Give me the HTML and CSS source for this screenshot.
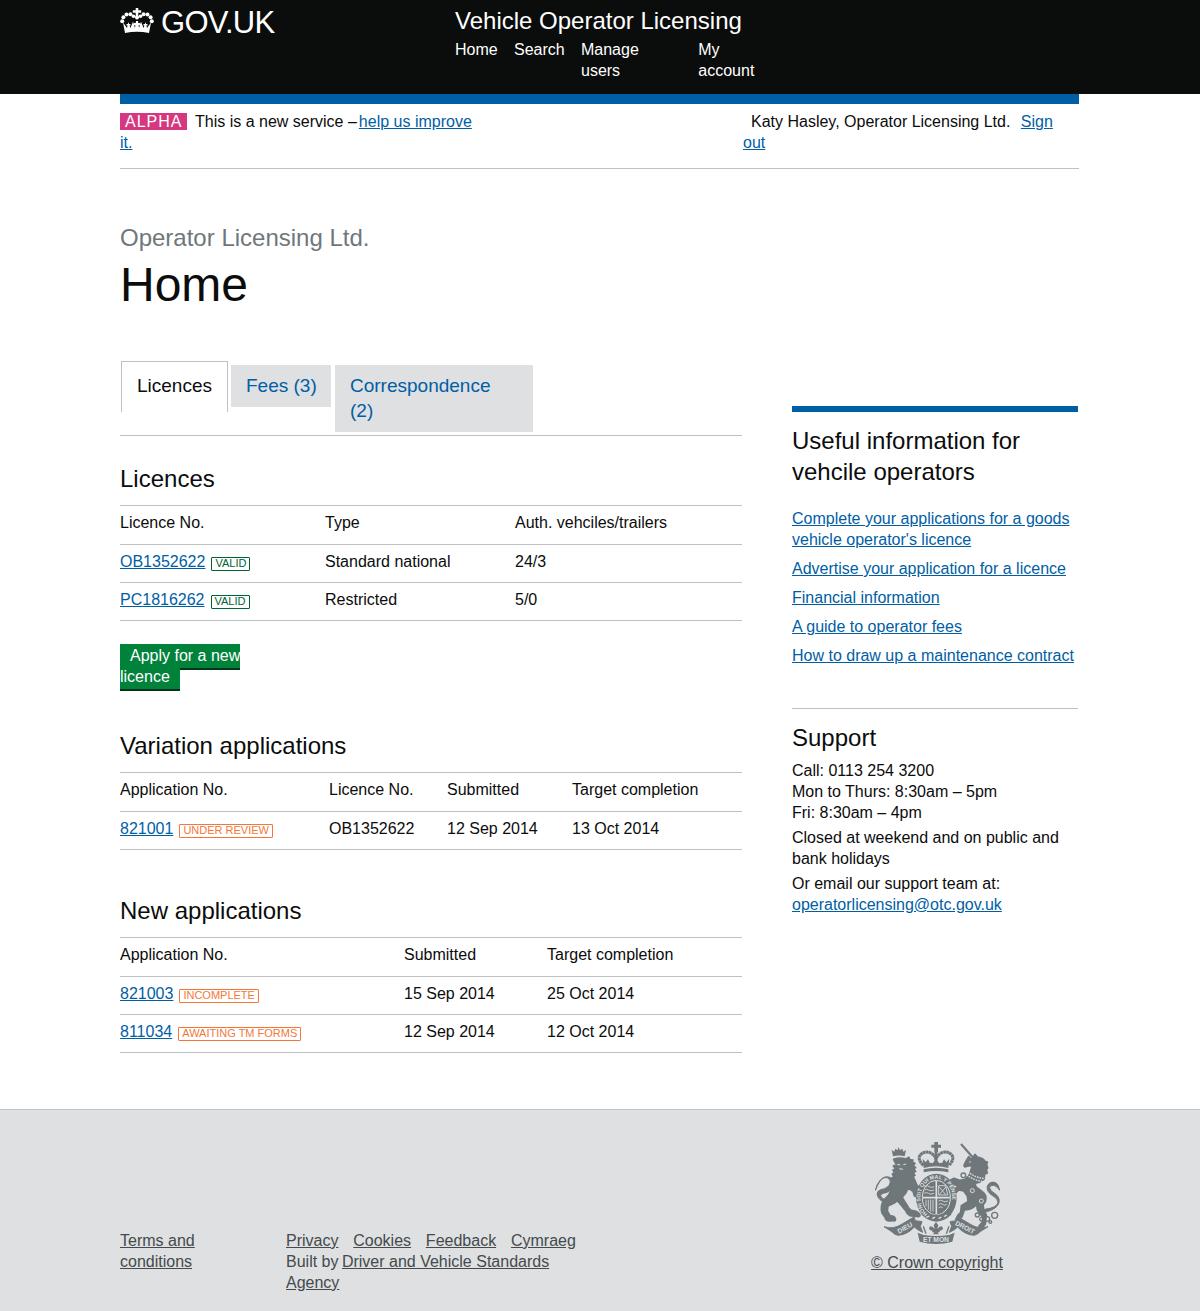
FILE: index.html
```html
<!DOCTYPE html>
<html lang="en">
<head>
<meta charset="utf-8">
<title>Home - Vehicle Operator Licensing</title>
<link rel="stylesheet" href="styles.css">
</head>
<body>
<header class="masthead">
  <div class="wrap masthead-inner">
    <a class="brand" href="#">
      <svg class="crown" viewBox="0 0 34 26" fill="#fff" aria-hidden="true">
        <path d="M5 25 3 14.500 7 20 8.300 14 10.500 20 13 13.500 15 20 16 13H18L19 20 21 13.500 23.500 20 25.700 14 27 20 31 14.500 29 25Q17 22.500 5 25Z"/>
        <path d="M15.700 0h2.600v2.200h2.900v2.600h-2.900v5.400h-2.600V4.800H12.800V2.200h2.900Z"/>
        <circle cx="2.200" cy="13.200" r="2"/><circle cx="3.400" cy="9.300" r="2"/><circle cx="6.500" cy="6.600" r="2"/><circle cx="10.400" cy="6.200" r="2"/><circle cx="13.500" cy="8.300" r="1.800"/>
        <circle cx="17" cy="9.500" r="2"/>
        <circle cx="31.800" cy="13.200" r="2"/><circle cx="30.600" cy="9.300" r="2"/><circle cx="27.500" cy="6.600" r="2"/><circle cx="23.600" cy="6.200" r="2"/><circle cx="20.500" cy="8.300" r="1.800"/>
        <path d="M14 15h6v2.200h-6zM6.500 16H10.500v1.600H6.500zM23.500 16h4v1.600H23.500z"/>
      </svg>
      <span class="brand-name">GOV.UK</span>
    </a>
    <div class="service">
      <a class="service-name" href="#">Vehicle Operator Licensing</a>
      <nav class="nav">
        <a href="#">Home</a><a href="#">Search</a><a class="nav-users" href="#">Manage users</a><a class="nav-account" href="#">My account</a>
      </nav>
    </div>
  </div>
</header>
<div class="wrap">
  <div class="phase">
    <p class="phase-text"><strong class="alpha">ALPHA</strong>This is a new service –<a class="improve" href="#">help us improve it.</a></p>
    <p class="user"><span class="user-name">Katy Hasley, Operator Licensing Ltd.</span> <a href="#">Sign out</a></p>
  </div>
  <h1><span class="caption">Operator Licensing Ltd.</span>Home</h1>
  <div class="columns">
    <main class="main">
      <nav class="tabs">
        <a class="tab tab-on" href="#">Licences</a><a class="tab tab-fees" href="#">Fees (3)</a><a class="tab tab-wide" href="#">Correspondence (2)</a>
      </nav>
      <section>
        <h2>Licences</h2>
        <table class="licences">
          <tr><th>Licence No.</th><th>Type</th><th>Auth. vehciles/trailers</th></tr>
          <tr><td><a href="#">OB1352622</a><span class="tag tag-green">VALID</span></td><td>Standard national</td><td>24/3</td></tr>
          <tr><td><a href="#">PC1816262</a><span class="tag tag-green">VALID</span></td><td>Restricted</td><td>5/0</td></tr>
        </table>
        <p class="apply"><a class="button" href="#">Apply for a new licence</a></p>
      </section>
      <section class="variations-block">
        <h2>Variation applications</h2>
        <table class="variations">
          <tr><th>Application No.</th><th>Licence No.</th><th>Submitted</th><th>Target completion</th></tr>
          <tr><td><a href="#">821001</a><span class="tag">UNDER REVIEW</span></td><td>OB1352622</td><td>12 Sep 2014</td><td>13 Oct 2014</td></tr>
        </table>
      </section>
      <section class="new-block">
        <h2>New applications</h2>
        <table class="new">
          <tr><th>Application No.</th><th>Submitted</th><th>Target completion</th></tr>
          <tr><td><a href="#">821003</a><span class="tag">INCOMPLETE</span></td><td>15 Sep 2014</td><td>25 Oct 2014</td></tr>
          <tr><td><a href="#">811034</a><span class="tag">AWAITING TM FORMS</span></td><td>12 Sep 2014</td><td>12 Oct 2014</td></tr>
        </table>
      </section>
    </main>
    <aside class="side">
      <h2>Useful information for vehcile operators</h2>
      <ul class="links">
        <li><a href="#">Complete your applications for a goods vehicle operator's licence</a></li>
        <li><a href="#">Advertise your application for a licence</a></li>
        <li><a href="#">Financial information</a></li>
        <li><a href="#">A guide to operator fees</a></li>
        <li><a href="#">How to draw up a maintenance contract</a></li>
      </ul>
      <div class="support">
        <h2>Support</h2>
        <p>Call: 0113 254 3200<br>Mon to Thurs: 8:30am – 5pm<br>Fri: 8:30am – 4pm</p>
        <p>Closed at weekend and on public and bank holidays</p>
        <p>Or email our support team at: <a href="#">operatorlicensing@otc.gov.uk</a></p>
      </div>
    </aside>
  </div>
</div>
<footer class="footer">
  <div class="wrap footer-inner">
    <a class="terms" href="#">Terms and conditions</a>
    <div class="footer-mid">
      <div class="footer-links"><a href="#">Privacy</a><a href="#">Cookies</a><a href="#">Feedback</a><a href="#">Cymraeg</a></div>
      <p>Built by <a class="agency" href="#">Driver and Vehicle Standards Agency</a></p>
    </div>
    <a class="copyright" href="#">
      <svg class="arms" viewBox="45 36 375 306" fill="#6f777b" aria-hidden="true">
        <!-- imperial crown -->
        <path d="M223 36h11v8h9v9h-9v14h-11V53h-9v-9h9z"/>
        <g fill="none" stroke="#6f777b">
          <path d="M190 106Q172 88 180 76 192 62 210 68 224 74 228 88 232 74 246 68 264 62 276 76 284 88 267 106" stroke-width="9" stroke-dasharray="8 1"/>
          <path d="M228 66v40" stroke-width="8"/>
        </g>
        <path d="M188 86l9 11 7-9 5 10 9 2 10-13 10 13 9-2 5-10 7 9 9-11-3 28q-37-10-74 0z"/>
        <path d="M191 118q37-9 74 0v9q-37-8-74 0z"/>
        <!-- lion -->
        <path d="M99 79l-4-19 8 5 3-9 7 5 3-10 4 10 7-5 3 9 8-5-4 19q-18-5-35 0z"/>
        <path stroke="#6f777b" stroke-width="5" stroke-linejoin="round" d="M101 88q18-7 36-1l10-5 2 7 10 1-2 7 8 3-5 7 7 6-6 4 6 7-7 4 5 8-6 4 5 9q4 14 13 24l2 22-7 7-9-5-4-13-15-10-6 14-11 14q8 15 14 23 5 11 13 16l14 3q12 6 12 13-4 5-12 2l-19-2q-8-5-12-15l-14-17-11-13-9 7-19 9-2 15 8 14 12 3q7 7 3 12l-18 1q-10-1-12-11l-9-13q-6-21 5-38l15-16q9-12 9-26l4-17-4-8 7-3-5-9 7-3-5-9 8-3-7-9 9-4-5-9z"/>
        <path d="M72 218Q44 200 54 184 61 178 74 176 94 166 90 151 84 139 72 143q-13 5-26 38 4-19 15-31 14-14 28-8 17 8 13 24-5 16-24 22-18 3-16 10 3 8 16 12z" stroke="#6f777b" stroke-width="3"/>
        <path d="M112 103l9 2M130 104l8-2M118 116l11 2" fill="none" stroke="#dee0e2" stroke-width="3"/>
        <!-- unicorn -->
        <path d="M303 42l37 42" fill="none" stroke="#6f777b" stroke-width="6"/>
        <path stroke="#6f777b" stroke-width="5" stroke-linejoin="round" d="M334 88l6-7 5-8 7 8q18 3 24 14l6 1-2 8 3 9-4 6 3 10-8 4-2 15q-13 11-27 12l3 11 19 14q15 10 9 30l-7 10 2 12 8 18-3 27-10 14-12 0 4-9 9-10 2-14-17-24-2-17q-7 11-24 16l-13 2-7 20-11 12-8-3 6-12 9-10 2-20 20-13-2-16-11-15-14-3-10 9-7 6-6-5 5-10 16-11q-10-4-16-9l-11 8 0-4 4-14 10-5 17 6 16-3 14-15 5-17 4-9-14 1-9 3-3-4 5-12 9-15z"/>
        <path d="M374 238q38-5 40-21 0-12-16-20-20-12-16-29 8-16 25-10 9 5 12 23-7-13-18-15-12-1-12 7 0 9 16 18 15 10 12 27-6 20-41 28z" stroke="#6f777b" stroke-width="3"/>
        <path d="M323 125q24 19 48 20M319 134q24 18 48 20" fill="none" stroke="#dee0e2" stroke-width="4" stroke-dasharray="5 3"/>
        <circle cx="330" cy="96" r="2.500" fill="#dee0e2"/>
        <g fill="none" stroke="#6f777b" stroke-width="4"><circle cx="310" cy="136" r="7"/><circle cx="352" cy="255" r="6"/><circle cx="364" cy="268" r="5"/><circle cx="382" cy="267" r="7"/><circle cx="404" cy="256" r="9"/><circle cx="391" cy="276" r="4"/></g>
        <g fill="none" stroke="#dee0e2" stroke-width="3"><circle cx="337" cy="182" r="6"/><circle cx="364" cy="213" r="6"/></g>
        <!-- garter and shield -->
        <ellipse cx="229" cy="203" rx="61" ry="72"/>
        <ellipse cx="229" cy="203" rx="42" ry="52" fill="none" stroke="#dee0e2" stroke-width="3"/>
        <path id="garter" d="M203 252Q181 235 181 203C181 171 203 146 229 146S277 171 277 203Q277 235 255 252" fill="none"/>
        <path d="M229 153v100M189 203h80" stroke="#dee0e2" stroke-width="5"/>
        <g fill="none" stroke="#dee0e2" stroke-width="2.500">
          <path d="M196 170q6-5 12 0t14 0M194 180q6-5 12 0t16 0M193 190q6-5 12 0t17 0"/>
          <path d="M237 170l20 24M258 170l-20 24M236 167h21l6 28h-27zM236 213q6-5 12 0t16 0M236 223q6-5 12 0t12 0M236 233q6-5 12 0"/>
          <path d="M198 209v20M205 209v30M212 209v36M219 209v36"/>
        </g>
        <path d="M188 239q41 31 82 0l4 15q-45 33-90 0z"/>
        <path d="M199 262l9-4M217 266l8-5M236 266l8-5M253 260l7-5" stroke="#dee0e2" stroke-width="4"/>
        <!-- motto scroll -->
        <path d="M72 290q28 10 56-9l34-20 4 11 20 3-5 14 7 18-15-8-10-8q-22 24-50 25-12-4-19-12z" stroke="#6f777b" stroke-width="3"/>
        <path d="M384 290q-28 10-56-9l-34-20-4 11-20 3 5 14-7 18 15-8 10-8q22 24 50 25 12-4 19-12z" stroke="#6f777b" stroke-width="3"/>
        <path d="M173 308l18 7q38 6 76 0l17-7-7 27q-49 14-98 0z"/>
        <path d="M190 289l8 22M267 289l-8 22" stroke="#6f777b" stroke-width="4"/>
        <path d="M228 276l7 10-3 11q11-13 16-5 3 10-9 10v5h-6l4 6h-18l4-6h-6v-5q-12 0-9-10 5-8 16 5l-3-11z"/>
        <g class="motto" fill="#dee0e2"><text transform="translate(117 311) rotate(-29)">DIEU</text><text x="189" y="336">ET MON</text><text transform="translate(284 284) rotate(27)">DROIT</text></g>
        <text class="garter-text" fill="#dee0e2"><textPath href="#garter">HONI SOIT QUI MAL Y PENSE</textPath></text>
      </svg>
      <span>© Crown copyright</span>
    </a>
  </div>
</footer>
</body>
</html>
```
FILE: styles.css
```css
* { box-sizing: border-box; }
body { margin: 0; background: #fff; color: #0b0c0c; font: 16px/21px "Liberation Sans", Arial, sans-serif; }
p, h1, h2, ul { margin: 0; padding: 0; font-weight: 400; }
a { color: #005ea5; text-decoration: underline; }
.wrap { width: 960px; margin: 0 auto; padding-right: 1px; }

.masthead { height: 94px; background: #0b0c0c; }
.masthead a { color: #fff; text-decoration: none; }
.masthead-inner { display: flex; }
.brand { display: flex; width: 335px; padding-top: 8px; }
.crown { width: 34px; height: 26px; margin-right: 7px; }
.brand-name { font-size: 31px; line-height: 30px; letter-spacing: -.7px; }
.service { padding-top: 6px; }
.service-name { display: block; font-size: 24px; line-height: 30px; }
.nav { display: flex; gap: 16.3px; padding-top: 3px; }
.nav-users { width: 101px; padding-right: 40px; }
.nav-account { width: 60px; }

.phase { display: flex; justify-content: space-between; height: 75px; padding-top: 7px; border-top: 10px solid #005ea5; border-bottom: 1px solid #bfc1c3; }
.phase-text { width: 360px; }
.improve { margin-left: 2px; }
.alpha { display: inline-block; width: 67px; height: 17px; margin-right: 8px; padding-left: 5px; background: #d53880; color: #fff; font-weight: 400; line-height: 17px; letter-spacing: 1px; }
.user { width: 336px; padding-right: 20px; }
.user-name { margin: 0 6px 0 8px; }

h1 { padding-top: 54px; font-size: 48px; line-height: 50px; }
.caption { display: block; margin-bottom: 7px; color: #6f777b; font-size: 24px; line-height: 30px; }
.columns { display: flex; justify-content: space-between; padding: 51px 1px 0 0; }
.main { width: 622px; }
.tabs { display: flex; align-items: flex-start; height: 75px; padding-left: 1px; border-bottom: 1px solid #bfc1c3; }
.tab { margin: 4px 4px 0 0; padding: 8px 15px 9px; background: #dee0e2; font-size: 19px; line-height: 25px; text-decoration: none; }
.tab-on { height: 51px; margin: 0 3px 0 0; padding: 11px 15px; border: 1px solid #bfc1c3; border-bottom: 0; background: #fff; color: #0b0c0c; }
.tab-fees { width: 100px; padding-right: 0; white-space: nowrap; }
.tab-wide { width: 198px; }
h2 { font-size: 24px; line-height: 30px; }
.main h2 { padding-top: 28px; margin-bottom: 11px; }
table { width: 622px; table-layout: fixed; border-collapse: separate; border-spacing: 0; border-top: 1px solid #bfc1c3; }
th, td { height: 38px; padding: 0 0 4px; border-bottom: 1px solid #bfc1c3; text-align: left; font-weight: 400; white-space: nowrap; }
th { height: 39px; padding-bottom: 6px; }
.licences th:nth-child(1) { width: 205px; }
.licences th:nth-child(2) { width: 190px; }
.variations th:nth-child(1) { width: 209px; }
.variations th:nth-child(2) { width: 118px; }
.variations th:nth-child(3) { width: 125px; }
.new th:nth-child(1) { width: 284px; }
.new th:nth-child(2) { width: 143px; }
.tag { display: inline-block; height: 14px; margin-left: 6px; padding: 0 3px; border: 1px solid #f47738; border-radius: 1px; color: #f47738; font-size: 11px; line-height: 10px; vertical-align: 0; }
.tag-green { border-color: #006435; color: #006435; }
.apply { width: 150px; padding-top: 24px; }
.button { padding: 3px 10px 4px; background: #00823b; box-shadow: 0 2px 0 #003618; color: #fff; text-decoration: none; }
.variations-block { padding-top: 16px; }
.new-block { padding-top: 18px; }

.side { width: 286px; margin-top: 45px; border-top: 6px solid #005ea5; }
.side h2 { padding-top: 13px; line-height: 31px; }
.links { padding: 21px 0 42px; list-style: none; }
.links li { margin-bottom: 8px; }
.links li:last-child { margin-bottom: 0; white-space: nowrap; }
.support { border-top: 1px solid #bfc1c3; }
.support h2 { margin-bottom: 7px; }
.support p { margin-bottom: 4px; }

.footer { height: 202px; margin-top: 56px; border-top: 1px solid #bfc1c3; background: #dee0e2; color: #454a4c; }
.footer a { color: #454a4c; }
.footer-inner { display: flex; }
.terms { width: 100px; margin: 120px 66px 0 0; }
.footer-mid { width: 300px; padding-top: 120px; }
.footer-links { display: flex; gap: 14.8px; }
.footer-mid p { width: 280px; }
.agency { margin-left: -1px; }
.copyright { display: flex; flex-direction: column; align-items: center; width: 134px; margin: 32px 0 0 284px; }
.arms { width: 125px; height: 102px; margin-bottom: 8px; }
.motto { font: bold 20px "Liberation Sans", sans-serif; }
.garter-text { font: bold 16px "Liberation Sans", sans-serif; }
```
